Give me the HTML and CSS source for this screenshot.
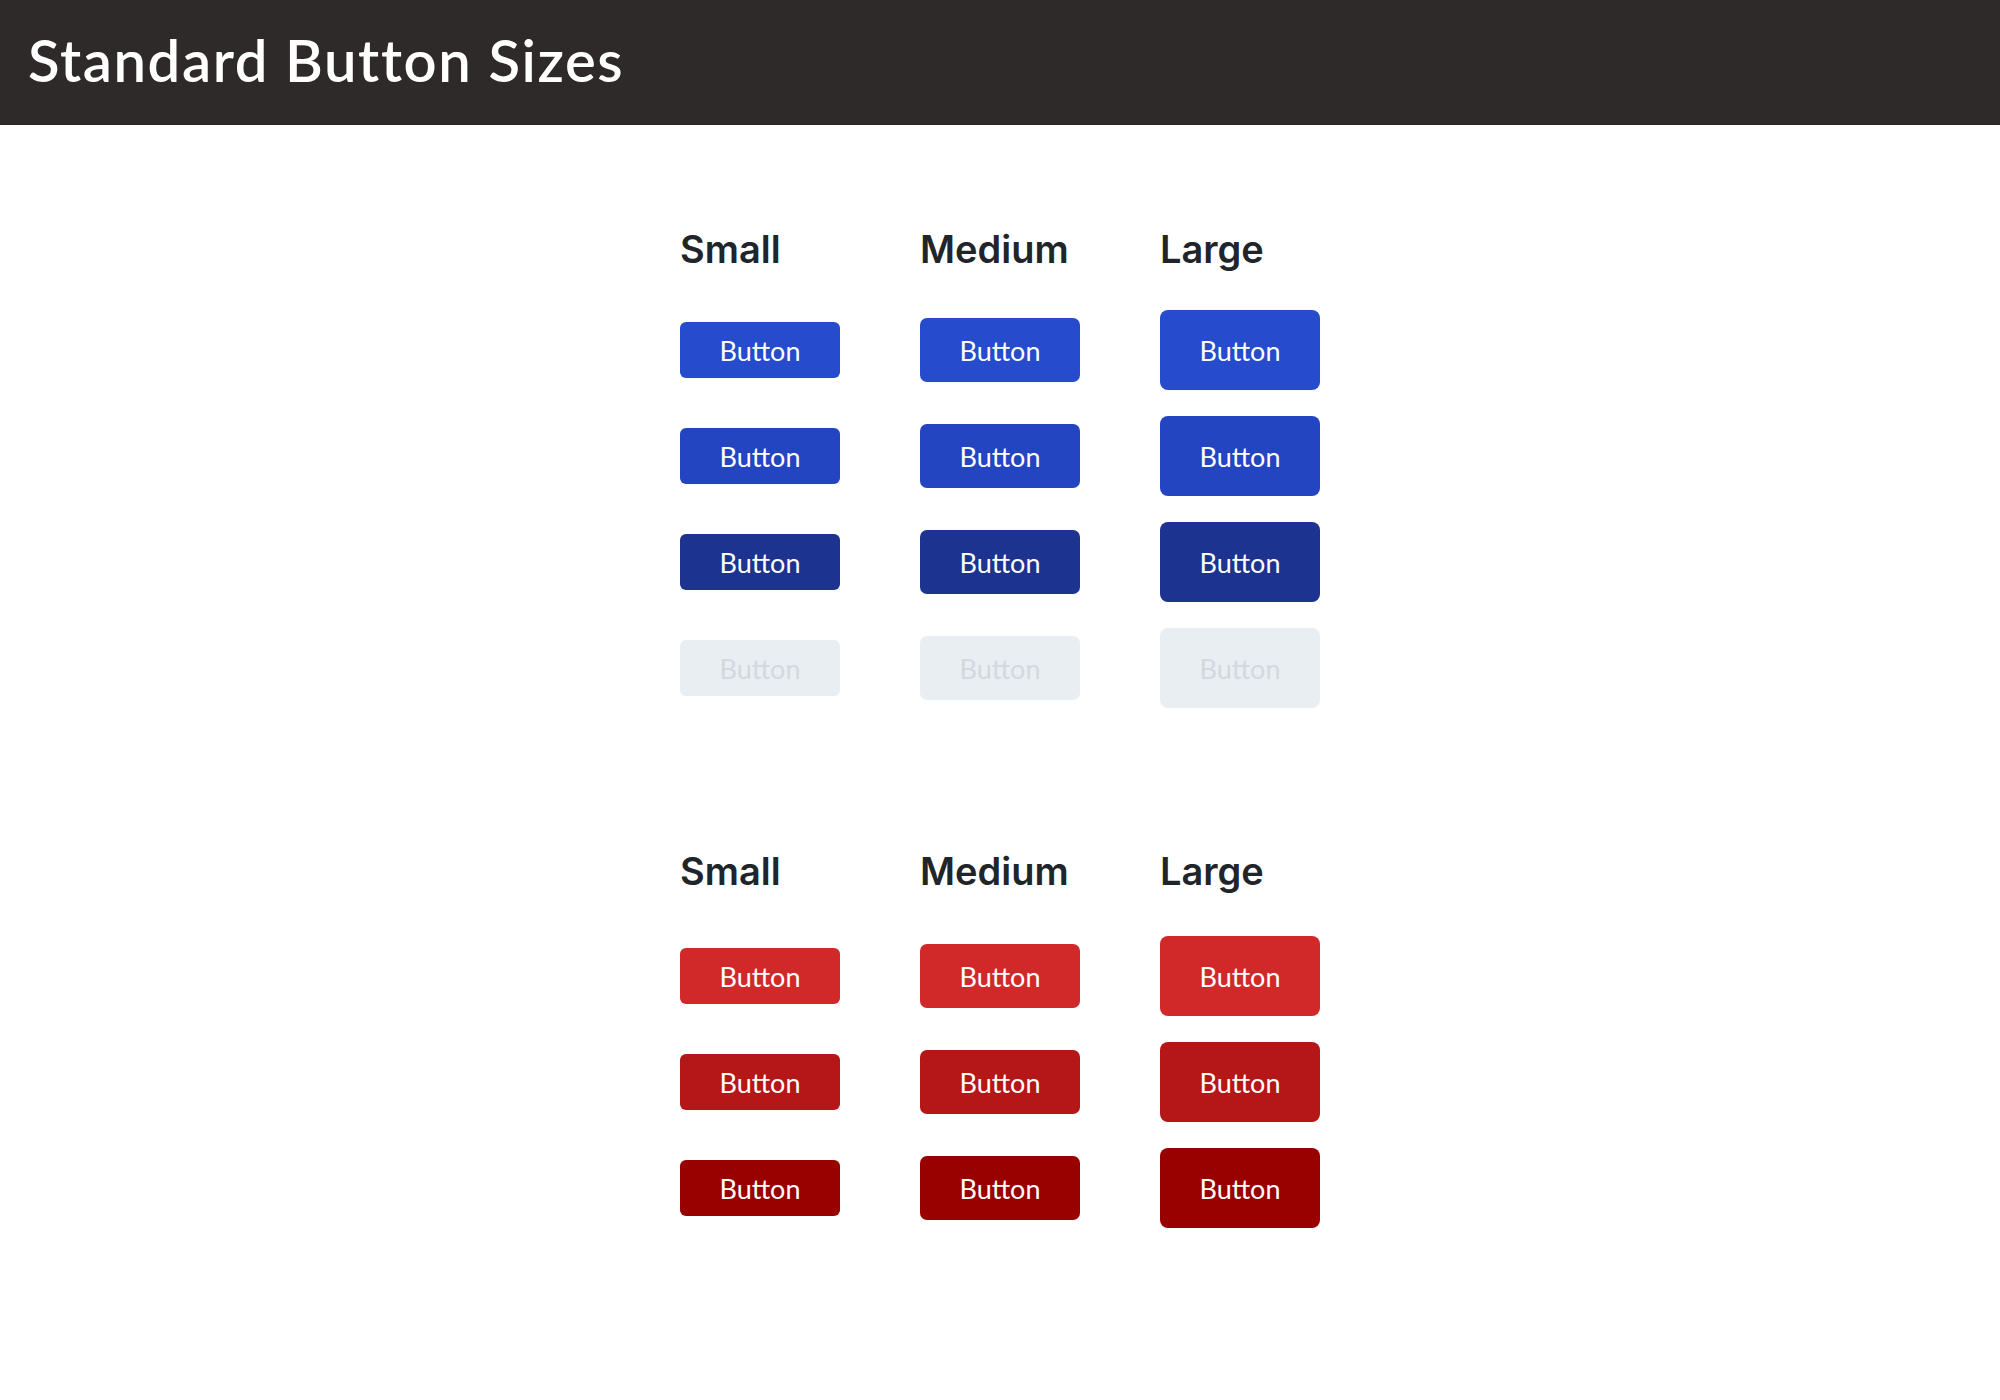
FILE: index.html
```html
<!DOCTYPE html>
<html lang="en">
<head>
    <meta charset="UTF-8">
    <meta name="viewport" content="width=device-width, initial-scale=1.0">
    <title>Standard Button Sizes</title>
    <link rel="stylesheet" href="styles.css">
</head>
<body>
    <header class="topbar">
        <h1 class="topbar-title">Standard Button Sizes</h1>
    </header>

    <main class="page">
        <!-- primary -->
        <section class="size-grid">
            <h2 class="size-label">Small</h2>
            <h2 class="size-label">Medium</h2>
            <h2 class="size-label">Large</h2>

            <div class="cell"><button class="btn btn-sm primary">Button</button></div>
            <div class="cell"><button class="btn btn-md primary">Button</button></div>
            <div class="cell"><button class="btn btn-lg primary">Button</button></div>

            <div class="cell"><button class="btn btn-sm primary hover">Button</button></div>
            <div class="cell"><button class="btn btn-md primary hover">Button</button></div>
            <div class="cell"><button class="btn btn-lg primary hover">Button</button></div>

            <div class="cell"><button class="btn btn-sm primary pressed">Button</button></div>
            <div class="cell"><button class="btn btn-md primary pressed">Button</button></div>
            <div class="cell"><button class="btn btn-lg primary pressed">Button</button></div>

            <div class="cell"><button class="btn btn-sm disabled">Button</button></div>
            <div class="cell"><button class="btn btn-md disabled">Button</button></div>
            <div class="cell"><button class="btn btn-lg disabled">Button</button></div>
        </section>

        <!-- danger -->
        <section class="size-grid danger-set">
            <h2 class="size-label">Small</h2>
            <h2 class="size-label">Medium</h2>
            <h2 class="size-label">Large</h2>

            <div class="cell"><button class="btn btn-sm danger">Button</button></div>
            <div class="cell"><button class="btn btn-md danger">Button</button></div>
            <div class="cell"><button class="btn btn-lg danger">Button</button></div>

            <div class="cell"><button class="btn btn-sm danger hover">Button</button></div>
            <div class="cell"><button class="btn btn-md danger hover">Button</button></div>
            <div class="cell"><button class="btn btn-lg danger hover">Button</button></div>

            <div class="cell"><button class="btn btn-sm danger pressed">Button</button></div>
            <div class="cell"><button class="btn btn-md danger pressed">Button</button></div>
            <div class="cell"><button class="btn btn-lg danger pressed">Button</button></div>
        </section>
    </main>
</body>
</html>
```

FILE: styles.css
```css
* {
    margin: 0;
    padding: 0;
    box-sizing: border-box;
}
body {
    background-color: #fff;
    font-family: "Lato", "Liberation Sans", sans-serif;
}
.topbar {
    height: 125px;
    background-color: #2e2a29;
    display: flex;
    align-items: center;
    padding: 0 28px 6px;
}
.topbar-title {
    color: #fff;
    font-size: 58px;
    font-weight: 600;
    line-height: 1.2;
    letter-spacing: 1.6px;
}
.page {
    display: flex;
    flex-direction: column;
    align-items: center;
    gap: 144px;
    padding-top: 101px;
    padding-bottom: 100px;
}
.size-grid {
    display: grid;
    grid-template-columns: repeat(3, 160px);
    grid-template-rows: 58px;
    grid-auto-rows: 80px;
    column-gap: 80px;
    row-gap: 26px;
}
.size-label {
    grid-row: 1;
    align-self: start;
    font-family: "Inter", "Liberation Sans", sans-serif;
    font-size: 38px;
    font-weight: 600;
    line-height: 46px;
    color: #212529;
}
.danger-set .size-label {
    margin-top: -4px;
}
.cell {
    display: flex;
    align-items: center;
}
.btn {
    width: 160px;
    border: none;
    color: #fff;
    font-family: "Lato", "Liberation Sans", sans-serif;
    font-size: 27px;
    font-weight: 400;
    cursor: pointer;
}
.btn-sm {
    height: 56px;
    border-radius: 6px;
}
.btn-md {
    height: 64px;
    border-radius: 7px;
}
.btn-lg {
    height: 80px;
    border-radius: 8px;
}
.primary {
    background-color: #264bcc;
}
.primary.hover {
    background-color: #2345c2;
}
.primary.pressed {
    background-color: #1c348f;
}
.danger {
    background-color: #d12929;
}
.danger.hover {
    background-color: #b51618;
}
.danger.pressed {
    background-color: #990000;
}
.disabled {
    background-color: #e9eef3;
    color: #d3d8df;
    cursor: default;
}
```
